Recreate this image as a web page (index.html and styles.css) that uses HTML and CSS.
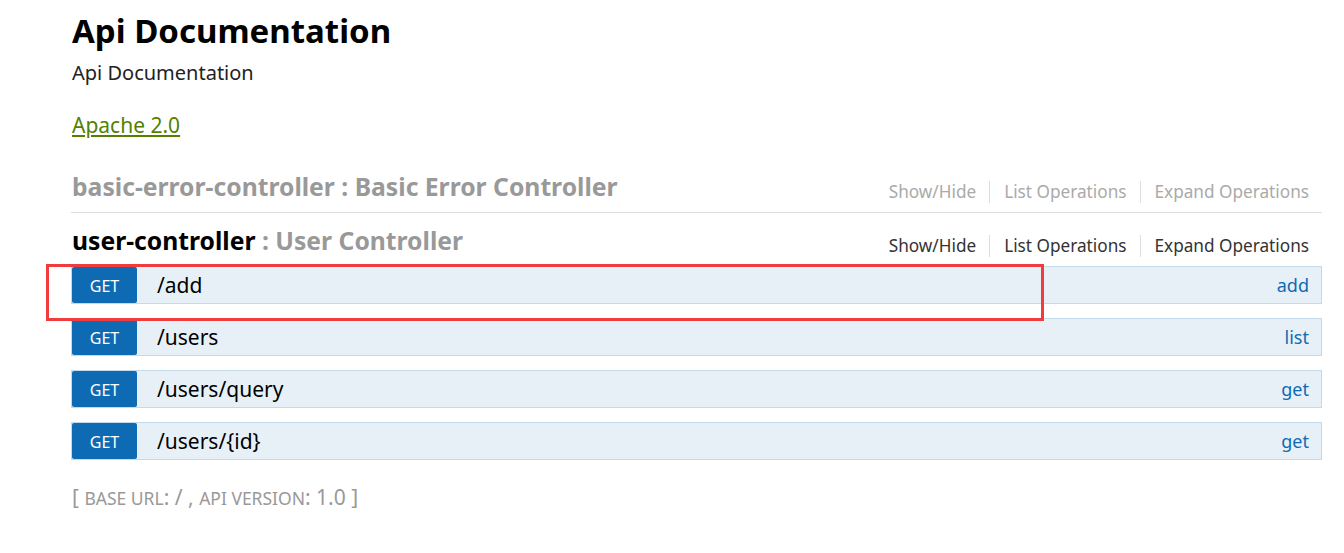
FILE: index.html
```html
<!DOCTYPE html>
<html>
<head>
<meta charset="utf-8">
<link rel="stylesheet" href="styles.css">
</head>
<body>
<div class="page">
  <div class="info">
    <h1 class="title">Api Documentation</h1>
    <div class="desc">Api Documentation</div>
    <div class="license"><a href="#">Apache 2.0</a></div>
  </div>
  <ul class="resources">
    <li class="resource">
      <div class="heading heading-muted">
        <h2 class="res-name"><span class="res-path">basic-error-controller</span> : Basic Error Controller</h2>
        <ul class="options">
          <li>Show/Hide</li>
          <li>List Operations</li>
          <li>Expand Operations</li>
        </ul>
      </div>
    </li>
    <li class="resource">
      <div class="heading heading-active">
        <h2 class="res-name"><span class="res-path">user-controller</span> : User Controller</h2>
        <ul class="options">
          <li>Show/Hide</li>
          <li>List Operations</li>
          <li>Expand Operations</li>
        </ul>
      </div>
      <ul class="endpoints">
        <li class="op op-highlight">
          <span class="method">GET</span><span class="path">/add</span><span class="summary">add</span>
          <div class="annot"></div>
        </li>
        <li class="op"><span class="method">GET</span><span class="path">/users</span><span class="summary">list</span></li>
        <li class="op"><span class="method">GET</span><span class="path">/users/query</span><span class="summary">get</span></li>
        <li class="op"><span class="method">GET</span><span class="path">/users/{id}</span><span class="summary">get</span></li>
      </ul>
    </li>
  </ul>
  <div class="footer">[ <span class="small">BASE URL</span>: / , <span class="small">API VERSION</span>: 1.0 ]</div>
</div>
</body>
</html>
```
FILE: styles.css
```css
* { box-sizing: border-box; }
html, body { margin: 0; padding: 0; background: #fff; }
body { font-family: "Noto Sans", "Open Sans", sans-serif; color: #000; }
.page { margin-left: 71px; width: 1251px; padding-top: 10px; }
.title { margin: 0; font-size: 33px; font-weight: 700; line-height: 42px; padding-left: 1px; }
.desc { font-size: 20px; line-height: 28px; color: #222; padding-left: 1px; margin-top: 7px; }
.license { margin-top: 24px; padding-left: 1px; font-size: 21px; line-height: 28px; }
.license a { color: #547f00; text-decoration: underline; }
.resources { list-style: none; margin: 32px 0 0; padding: 0; }
.resource { margin: 0; }
.heading { display: flex; justify-content: space-between; align-items: flex-end; border-bottom: 1px solid #ddd; padding: 0 1px 9px; }
.resource:last-child .heading { border-bottom: none; padding-bottom: 9px; margin-top: 12px; }
.res-name { margin: 0; font-size: 24.7px; font-weight: 700; line-height: 32px; color: #999; }
.heading-active .res-path { color: #000; }
.options { list-style: none; margin: 0 12px 0 0; padding: 0; display: flex; font-size: 17.2px; line-height: 22px; }
.options li { padding: 0 13px 0 14px; border-left: 1px solid #ddd; }
.options li:first-child { border-left: none; }
.options li:last-child { padding-right: 0; }
.heading-muted .options { color: #aaa; }
.heading-active .options { color: #333; }
.endpoints { list-style: none; margin: 0; padding: 0; }
.op { position: relative; display: flex; align-items: center; height: 38px; background: #e7f0f7; border: 1px solid #c3d9ec; margin-bottom: 14px; }
.method { width: 65px; height: 36px; background: #0f6ab4; color: #fff; border-radius: 2px; font-size: 16px; display: flex; align-items: center; justify-content: center; padding-top: 2px; }
.path { margin-left: 20px; font-size: 21px; flex: 1; }
.summary { color: #0f6ab4; font-size: 18px; margin-right: 12px; }
.annot { position: absolute; z-index: 5; left: -26px; top: -3px; width: 998px; height: 57px; border: 3px solid #f03c3c; pointer-events: none; }
.footer { margin-top: 23px; color: #999; font-size: 21px; padding-left: 1px; }
.footer .small { font-size: 17.5px; }
```
